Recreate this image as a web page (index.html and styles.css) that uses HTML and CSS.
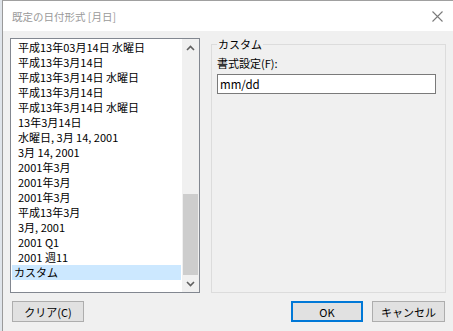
FILE: index.html
```html
<!DOCTYPE html>
<html lang="ja">
<head>
<meta charset="utf-8">
<link rel="stylesheet" href="styles.css">
</head>
<body>
<div class="dialog">
  <div class="titlebar">
    <span class="title">既定の日付形式 [月日]</span>
    <svg class="close" width="11" height="11" viewBox="0 0 11 11"><path d="M0.5 0.5 L10.5 10.5 M10.5 0.5 L0.5 10.5" stroke="#7a7a7a" stroke-width="1.1" fill="none"/></svg>
  </div>
  <div class="content">
    <div class="main">
      <div class="listbox">
        <ul class="items">
          <li>平成13年03月14日 水曜日</li>
          <li>平成13年3月14日</li>
          <li>平成13年3月14日 水曜日</li>
          <li>平成13年3月14日</li>
          <li>平成13年3月14日 水曜日</li>
          <li>13年3月14日</li>
          <li>水曜日, 3月 14, 2001</li>
          <li>3月 14, 2001</li>
          <li>2001年3月</li>
          <li>2001年3月</li>
          <li>2001年3月</li>
          <li>平成13年3月</li>
          <li>3月, 2001</li>
          <li>2001 Q1</li>
          <li>2001 週11</li>
          <li class="selected">カスタム</li>
        </ul>
        <div class="scrollbar">
          <div class="sb-btn"><svg width="9" height="6" viewBox="0 0 9 6"><path d="M1 5 L4.5 1.5 L8 5" stroke="#606060" stroke-width="1.6" fill="none"/></svg></div>
          <div class="sb-track"><div class="sb-thumb"></div></div>
          <div class="sb-btn"><svg width="9" height="6" viewBox="0 0 9 6"><path d="M1 1 L4.5 4.5 L8 1" stroke="#606060" stroke-width="1.6" fill="none"/></svg></div>
        </div>
      </div>
      <fieldset class="group">
        <legend>カスタム</legend>
        <div class="label">書式設定(F):</div>
        <div class="input">mm/dd</div>
      </fieldset>
    </div>
    <div class="buttons">
      <button class="btn">クリア(C)</button>
      <span class="spacer"></span>
      <button class="btn default">OK</button>
      <button class="btn">キャンセル</button>
    </div>
  </div>
</div>
</body>
</html>
```
FILE: styles.css
```css
html, body {
  margin: 0;
  padding: 0;
}
body {
  width: 453px;
  height: 331px;
  overflow: hidden;
  background: #dfe4ea;
  font-family: "Noto Sans CJK JP", "Noto Sans", sans-serif;
  font-size: 11px;
  color: #000;
}
.dialog {
  margin-left: 2px;
  height: 330px;
  border-left: 1px solid #9a9a9a;
  border-top: 1px solid #a0a0a0;
  background: #f0f0f0;
  display: flex;
  flex-direction: column;
}
.titlebar {
  height: 30px;
  background: #fff;
  display: flex;
  align-items: center;
  padding-left: 9px;
  padding-right: 10px;
}
.title {
  flex: 1;
  color: #9a9a9a;
  font-size: 10.5px;
  line-height: 13px;
}
.close {
  display: block;
}
.content {
  padding: 7px 7px 0 7px;
  display: flex;
  flex-direction: column;
}
.main {
  display: flex;
  gap: 11px;
  height: 255px;
}
.listbox {
  width: 188px;
  height: 253px;
  border: 1px solid #828790;
  background: #fff;
  display: flex;
}
.items {
  list-style: none;
  margin: 0;
  padding: 1px 1px 0 1px;
  width: 169px;
}
.items li {
  height: 15px;
  line-height: 15px;
  padding-left: 6px;
  white-space: nowrap;
}
.items li.selected {
  background: #cce8ff;
  padding-left: 2px;
}
.scrollbar {
  width: 17px;
  background: #f0f0f0;
  display: flex;
  flex-direction: column;
}
.sb-btn {
  height: 17px;
  display: flex;
  align-items: center;
  justify-content: center;
}
.sb-track {
  flex: 1;
  display: flex;
  flex-direction: column;
  justify-content: flex-end;
  padding: 0 1px;
}
.sb-thumb {
  height: 81px;
  background: #cdcdcd;
}
.group {
  margin: -1px 0 0 0;
  width: 235px;
  height: 256px;
  box-sizing: border-box;
  border: 1px solid #dcdcdc;
  padding: 0 9px 0 5px;
  min-width: 0;
}
.group legend {
  padding: 0 1px;
  margin-left: 0;
  line-height: 14px;
}
.label {
  margin-top: 5px;
  line-height: 14px;
}
.input {
  margin-top: 4px;
  height: 18px;
  border: 1px solid #7a7a7a;
  background: #fff;
  line-height: 18px;
  padding-left: 2px;
  width: 215px;
  font-size: 11.5px;
}
.buttons {
  display: flex;
  margin-top: 8px;
  padding-left: 2px;
  padding-right: 1px;
  gap: 9px;
}
.spacer {
  flex: 1;
}
.btn {
  width: 72px;
  height: 21px;
  border: 1px solid #adadad;
  background: #e1e1e1;
  font-family: "Noto Sans CJK JP", "Noto Sans", sans-serif;
  font-size: 11px;
  line-height: 14px;
  padding: 0;
  color: #000;
}
.btn.default {
  border: 2px solid #0078d7;
}
.btn:last-child {
  width: 73px;
}
```
